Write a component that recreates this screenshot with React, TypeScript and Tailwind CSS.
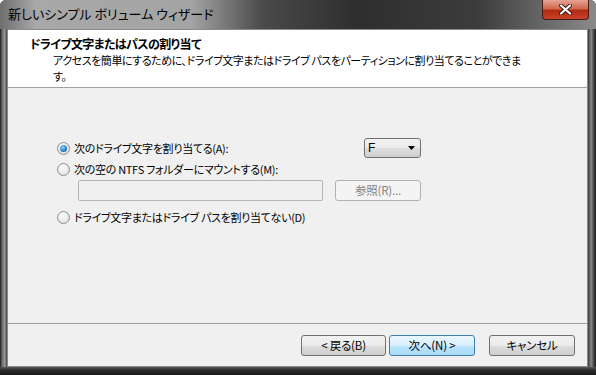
import React from 'react';

const jp = "font-['MS_UI_Gothic','Noto_Sans_CJK_JP',sans-serif] [font-feature-settings:'palt']";

const Radio = ({ checked }: { checked?: boolean }) => (
  <span className="w-[13px] h-[13px] rounded-full border border-[#8f8f8f] bg-[radial-gradient(circle_at_40%_35%,#ffffff,#d6d6d6)] flex items-center justify-center shrink-0">
    {checked && (
      <span className="w-[7px] h-[7px] rounded-full bg-[radial-gradient(circle_at_40%_35%,#8fd3ff,#1c6fb5_70%,#0b4d8a)]" />
    )}
  </span>
);

const Button = ({ label, primary, disabled }: { label: string; primary?: boolean; disabled?: boolean }) => (
  <div
    className={`h-[21px] rounded-[3px] border flex items-center justify-center text-[11.5px] tracking-[-0.2px] ${
      disabled
        ? 'border-[#adb2b5] bg-[#f4f4f4] text-[#838383]'
        : primary
        ? 'border-[#3c7fb1] bg-[linear-gradient(#eaf6fd_0%,#d9f0fc_50%,#bee6fd_50%,#a7d9f5_100%)] text-black'
        : 'border-[#707070] bg-[linear-gradient(#f2f2f2_0%,#ebebeb_50%,#dddddd_50%,#cfcfcf_100%)] text-black'
    }`}
  >
    <span className="leading-none">{label}</span>
  </div>
);

export default function App() {
  return (
    <div className={`w-[596px] h-[375px] bg-white ${jp}`}>
      <div className="w-[596px] h-[375px] flex flex-col bg-[#2b2b2b] rounded-t-[6px] overflow-hidden">
        {/* title bar */}
        <div className="h-[29px] flex items-start bg-[linear-gradient(90deg,#6e6e6e_0%,#a8a8a8_6%,#a4a4a4_32%,#4a4a4a_44%,#2e2e2e_60%,#3c3c3c_80%,#8a8a8a_100%)] relative">
          <span className="ml-[8px] mt-[7px] text-[13px] text-black leading-none">新しいシンプル ボリューム ウィザード</span>
          <div className="absolute right-[7px] top-0 w-[47px] h-[20px] rounded-b-[4px] border border-t-0 border-[#4a1a14] bg-[linear-gradient(#e8a493_0%,#cf6a4f_45%,#b32b12_55%,#c7432a_100%)] flex items-center justify-center">
            <svg width="13" height="11" viewBox="0 0 13 11">
              <path d="M2 1.5 L11 9.5 M11 1.5 L2 9.5" stroke="#3a1a12" strokeWidth="4" strokeLinecap="round" />
              <path d="M2 1.5 L11 9.5 M11 1.5 L2 9.5" stroke="#ffffff" strokeWidth="2.2" strokeLinecap="round" />
            </svg>
          </div>
        </div>
        <div className="flex flex-1">
          <div className="w-[7px] bg-[linear-gradient(90deg,#1a1a1a_0%,#6a6a6a_30%,#9a9a9a_70%,#3a3a3a_100%)]" />
          <div className="flex-1 flex flex-col border border-[#8a8a8a] bg-[#f0f0f0]">
            {/* header */}
            <div className="h-[58px] bg-white border-b border-[#a0a0a0] shrink-0">
              <div className="pl-[22px] pt-[5px] text-[12px] font-bold text-black leading-[17px] tracking-[-0.6px]">ドライブ文字またはパスの割り当て</div>
              <div className="pl-[45px] text-[11px] text-black leading-[16px] tracking-[-0.45px] whitespace-nowrap">
                アクセスを簡単にするために、ドライブ文字またはドライブ パスをパーティションに割り当てることができま
                <br />
                す。
              </div>
            </div>
            {/* body */}
            <div className="flex-1 border-b border-[#a0a0a0] text-[11px] tracking-[-0.3px] text-black">
              <div className="pt-[50px] pl-[49px] pr-[166px] flex items-center justify-between h-[70px]">
                <div className="flex items-center gap-[4px]">
                  <Radio checked />
                  <span className="leading-none">次のドライブ文字を割り当てる(A):</span>
                </div>
                <div className="w-[57px] h-[20px] rounded-[3px] border border-[#707070] bg-[linear-gradient(#f2f2f2_0%,#ebebeb_50%,#dddddd_50%,#cfcfcf_100%)] flex items-center justify-between pl-[3px] pr-[5px]">
                  <span className="text-[12px] leading-none font-['Liberation_Sans',sans-serif]">F</span>
                  <svg width="7" height="4" viewBox="0 0 7 4">
                    <path d="M0 0 H7 L3.5 4 Z" fill="#000" />
                  </svg>
                </div>
              </div>
              <div className="pl-[49px] mt-[5px] flex items-center gap-[4px]">
                <Radio />
                <span className="leading-none">次の空の NTFS フォルダーにマウントする(M):</span>
              </div>
              <div className="pl-[70px] mt-[4px] flex items-center gap-[12px]">
                <div className="w-[245px] h-[21px] rounded-[2px] border border-[#b4b4b4] bg-[#f0f0f0]" />
                <div className="w-[86px]">
                  <Button label="参照(R)..." disabled />
                </div>
              </div>
              <div className="pl-[49px] mt-[10px] flex items-center gap-[4px]">
                <Radio />
                <span className="leading-none">ドライブ文字またはドライブ パスを割り当てない(D)</span>
              </div>
            </div>
            {/* footer */}
            <div className="h-[42px] shrink-0 flex items-start pt-[11px] pl-[293px]">
              <div className="w-[85px]">
                <Button label="< 戻る(B)" />
              </div>
              <div className="w-[86px] ml-[3px]">
                <Button label="次へ(N) >" primary />
              </div>
              <div className="w-[86px] ml-[14px]">
                <Button label="キャンセル" />
              </div>
            </div>
          </div>
          <div className="w-[8px] bg-[linear-gradient(90deg,#3a3a3a_0%,#8a8a8a_40%,#4a4a4a_70%,#1a1a1a_100%)]" />
        </div>
        <div className="h-[8px] bg-[linear-gradient(#5a5a5a_0%,#2a2a2a_40%,#1a1a1a_100%)]" />
      </div>
    </div>
  );
}
